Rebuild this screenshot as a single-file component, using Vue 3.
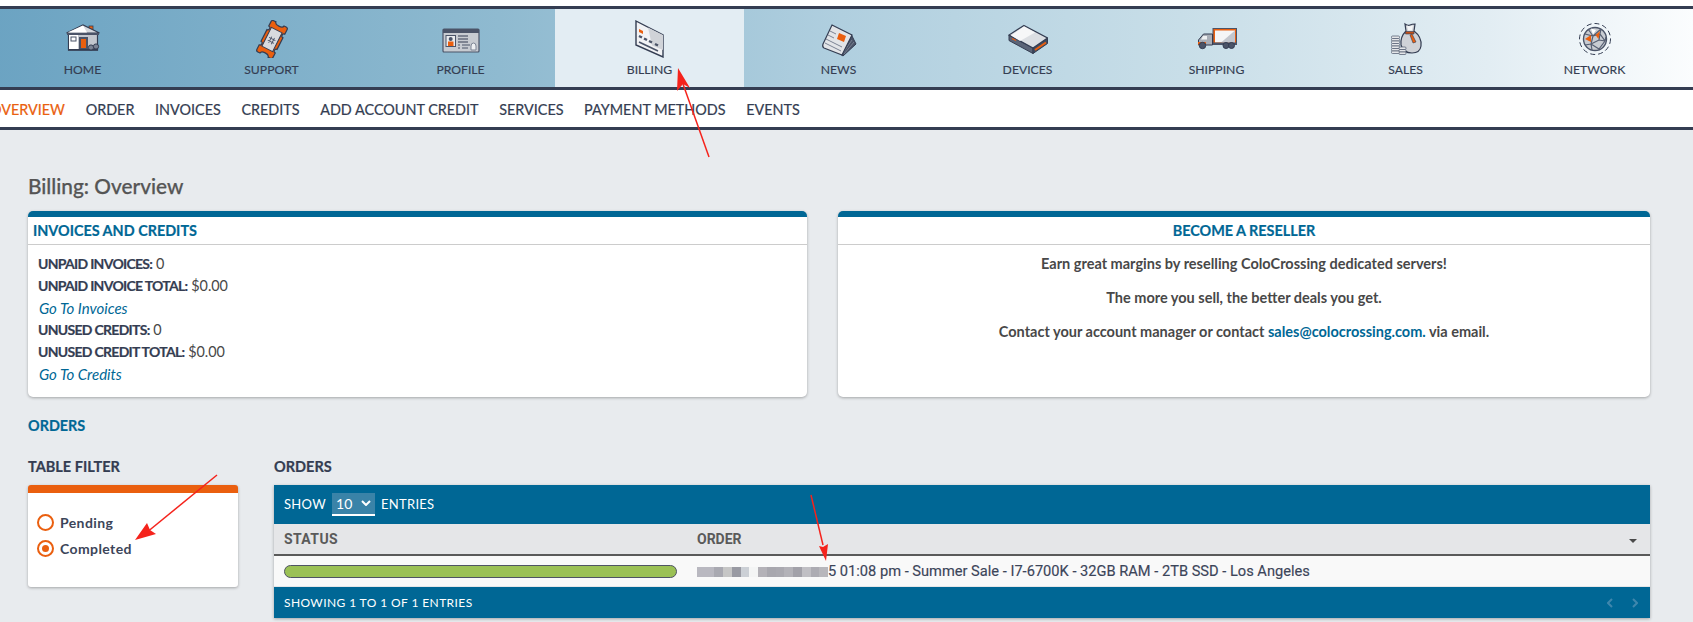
<template>
  <div class="page">
    <nav class="mainnav">
      <a class="navitem">
        <svg class="icon" viewBox="0 0 40 38">
          <rect x="26" y="6" width="4" height="5" fill="#ea5f0f" stroke="#343d52" stroke-width=".8" />
          <rect x="5.5" y="13" width="29" height="17" fill="#c3c7ce" stroke="#343d52" stroke-width="1.2" />
          <rect x="6" y="14" width="9" height="15.5" fill="#fff" />
          <polygon points="3.5,13 20,5 36.5,13" fill="#d5d8dd" stroke="#343d52" stroke-width="1.2" />
          <polygon points="4.5,12.6 20,5.4 24,12.6" fill="#fff" />
          <rect x="4" y="13" width="32" height="2" fill="#4b5468" />
          <rect x="8" y="17" width="5" height="4" fill="none" stroke="#4b5468" />
          <rect x="16" y="17" width="9" height="12" fill="#4b5468" />
          <rect x="18" y="19" width="5" height="9" fill="#ea5f0f" />
          <rect x="5" y="29" width="30" height="1.6" fill="#343d52" />
          <circle cx="28" cy="27.5" r="2.6" fill="#7c8494" stroke="#343d52" />
          <circle cx="33" cy="26.5" r="2.6" fill="#7c8494" stroke="#343d52" />
        </svg>
        <span>HOME</span>
      </a>
      <a class="navitem">
        <svg class="icon" viewBox="0 0 40 38">
          <g transform="rotate(27 20 19.5)">
            <path d="M13 2h2.5a4.5 2.5 0 0 0 9 0H27q2 0 2 2v5a2 2 0 0 0 0 4v13a2 2 0 0 0 0 4v5q0 2-2 2h-2.5a4.5 2.5 0 0 0-9 0H13q-2 0-2-2v-5a2 2 0 0 0 0-4V13a2 2 0 0 0 0-4V4q0-2 2-2z" fill="#ea5f0f" stroke="#343d52" stroke-width="1.2" />
            <rect x="14" y="9" width="12" height="21" fill="#d8dbdf" stroke="#343d52" />
            <path d="M16.5 19h7M16.5 22h7M18.5 17v7M21.5 17v7" stroke="#4b5468" stroke-width=".9" fill="none" />
          </g>
        </svg>
        <span>SUPPORT</span>
      </a>
      <a class="navitem">
        <svg class="icon" viewBox="0 0 40 38">
          <rect x="2" y="9" width="36" height="23" rx="1" fill="#c7cbd1" stroke="#4b5468" stroke-width="1.2" />
          <rect x="2" y="9" width="36" height="4" fill="#4b5468" />
          <rect x="5" y="15.5" width="9.5" height="11" fill="#e9ebee" stroke="#4b5468" />
          <circle cx="9.7" cy="19" r="2" fill="#4b5468" />
          <rect x="7" y="21.5" width="5.5" height="4.5" fill="#ea5f0f" />
          <path d="M17 16h10M17 19h10M17 22h10" stroke="#343d52" stroke-width="1.2" />
          <path d="M17 25h2M21 25h8M17 28h2M21 28h6" stroke="#4b5468" stroke-width="1" />
          <path d="M30 30v-4q0-3 2.5-3t2.5 3v4z" fill="#eef0f2" stroke="#7c8494" />
        </svg>
        <span>PROFILE</span>
      </a>
      <a class="navitem active">
        <svg class="icon" viewBox="0 0 40 38">
          <polygon points="6,1 33,15 33,37 6,25" fill="#f2f3f5" stroke="#343d52" stroke-width="1.4" />
          <polygon points="18,7.5 33,15 33,30 22,25.5" fill="#d0d3d8" />
          <polygon points="9,9 13,11 13,14 9,12" fill="#ea5f0f" />
          <path d="M9 16l3 1.5M14 18.5l3 1.5M19 21l3 1.5M25 24l3 1.5" stroke="#4b5468" stroke-width="2.4" />
          <path d="M9 22l19 9" stroke="#4b5468" stroke-width="1.6" />
        </svg>
        <span>BILLING</span>
      </a>
      <a class="navitem">
        <svg class="icon" viewBox="0 0 40 38">
          <polygon points="32,14 37,24 24,36 20,33" fill="#4b5468" stroke="#343d52" />
          <path d="M31 18l-9 14M33 20l-9 13M35 22l-10 12" stroke="#8b92a0" stroke-width=".7" />
          <path d="M13 5 33 15 23 35 5 28q-2-1-1-4z" fill="#e3e5e8" stroke="#343d52" stroke-width="1.2" />
          <path d="M11 11l6 3M9 15l6 3M7 19l16 8M6 23l16 8" stroke="#7c8494" stroke-width="1" />
          <polygon points="20,13 27,16 25,22 18,19" fill="#ea5f0f" />
        </svg>
        <span>NEWS</span>
      </a>
      <a class="navitem">
        <svg class="icon" viewBox="0 0 40 38">
          <polygon points="1,15 25,28 25,33.5 1,20.5" fill="#5b6477" stroke="#343d52" />
          <polygon points="25,28 39.5,18 39.5,23.5 25,33.5" fill="#414a5e" stroke="#343d52" />
          <polygon points="16,5.5 39.5,18 25,28 1,15" fill="#dcdfe3" stroke="#343d52" stroke-width="1.2" />
          <polygon points="16,6.5 27,12.5 12,21 3,15.5" fill="#f6f7f8" />
          <path d="M27 30 38 22.5" stroke="#ea5f0f" stroke-width="2" />
          <path d="M4 18.5l4 2" stroke="#ea5f0f" stroke-width="1.2" />
        </svg>
        <span>DEVICES</span>
      </a>
      <a class="navitem">
        <svg class="icon" viewBox="0 0 40 38">
          <rect x="16" y="8.5" width="23.5" height="16" fill="#ea5f0f" stroke="#4b5468" />
          <polygon points="18,10.5 38,10.5 38,22.5 18,22.5" fill="#f5f6f7" />
          <polygon points="38,10.5 38,22.5 24,22.5" fill="#c3c7ce" />
          <rect x="14" y="22.5" width="26" height="2.5" fill="#4b5468" />
          <path d="M15.5 14v11h-14v-5l5-6z" fill="#a9aeb7" stroke="#343d52" />
          <polygon points="6,16 10,16 10,19.5 4,19.5" fill="#eef0f2" />
          <rect x="1" y="22" width="8" height="2.5" fill="#ea5f0f" />
          <circle cx="5.5" cy="25.5" r="3.2" fill="#4b5468" stroke="#343d52" />
          <circle cx="29" cy="25.5" r="3" fill="#4b5468" stroke="#343d52" />
          <circle cx="34.5" cy="25.5" r="3" fill="#4b5468" stroke="#343d52" />
        </svg>
        <span>SHIPPING</span>
      </a>
      <a class="navitem">
        <svg class="icon" viewBox="0 0 40 38">
          <path d="M19 4q3 2 5 1t5-1l-1 7q8 6 7 15-1 7-9 7-9 0-11-8-1-8 5-14z" fill="#cfd2d7" stroke="#343d52" stroke-width="1.2" />
          <path d="M21 5.5q3 1.5 6 0l-1 5h-4z" fill="#f5f6f7" />
          <path d="M19.5 11.5h8.5v2.5h-8.5z" fill="#c1511a" stroke="#343d52" stroke-width=".6" />
          <path d="M26 14l4 8-3 1-3-8z" fill="#ea5f0f" stroke="#343d52" stroke-width=".6" />
          <g fill="#e4e6e9" stroke="#5b6477" stroke-width=".8">
            <rect x="5.5" y="16" width="8" height="2.5" rx="1" />
            <rect x="5.5" y="18.5" width="8" height="2.5" rx="1" />
            <rect x="5.5" y="21" width="8" height="2.5" rx="1" />
            <rect x="5.5" y="23.5" width="8" height="2.5" rx="1" />
            <rect x="5.5" y="26" width="8" height="2.5" rx="1" />
            <rect x="5.5" y="28.5" width="8" height="2.5" rx="1" />
            <rect x="5.5" y="31" width="8" height="2.5" rx="1" />
            <rect x="13" y="27" width="7" height="2.5" rx="1" />
            <rect x="13" y="29.5" width="7" height="2.5" rx="1" />
            <rect x="13" y="32" width="7" height="2.5" rx="1" />
          </g>
        </svg>
        <span>SALES</span>
      </a>
      <a class="navitem">
        <svg class="icon" viewBox="0 0 40 38">
          <circle cx="20" cy="19" r="15.5" fill="none" stroke="#343d52" stroke-width="1" stroke-dasharray="5 3" />
          <circle cx="20" cy="19" r="11.5" fill="#c8ccd2" stroke="#4b5468" stroke-width="1.4" />
          <path d="M10 14l8 2 8-7M18 16l-2 8 8 5M16 24l-6 1M24 29l6-8-5-7-7 2M30 21l1-4M25 14l1-5M16 24l8-4 6 1M13 9l5 7M16 24l1 6M24 20l1-6" fill="none" stroke="#565f72" stroke-width="1.2" />
          <polygon points="16,8.5 21,10 18,14.5" fill="#fff" />
          <polygon points="25,11 23.5,19 20.5,15" fill="#ea5f0f" />
          <polygon points="10,19 16,15 16,22" fill="#ea5f0f" />
        </svg>
        <span>NETWORK</span>
      </a>
    </nav>

    <div class="subnav">
      <a class="current">OVERVIEW</a>
      <a>ORDER</a>
      <a>INVOICES</a>
      <a>CREDITS</a>
      <a>ADD ACCOUNT CREDIT</a>
      <a>SERVICES</a>
      <a>PAYMENT METHODS</a>
      <a>EVENTS</a>
    </div>

    <main class="content">
      <h1>Billing: Overview</h1>

      <div class="cards">
        <section class="card">
          <h2>INVOICES AND CREDITS</h2>
          <div class="card-body lines">
            <p><b>UNPAID INVOICES:</b> 0</p>
            <p><b>UNPAID INVOICE TOTAL:</b> $0.00</p>
            <p><a>Go To Invoices</a></p>
            <p><b>UNUSED CREDITS:</b> 0</p>
            <p><b>UNUSED CREDIT TOTAL:</b> $0.00</p>
            <p><a>Go To Credits</a></p>
          </div>
        </section>
        <section class="card reseller">
          <h2>BECOME A RESELLER</h2>
          <div class="card-body">
            <p>Earn great margins by reselling ColoCrossing dedicated servers!</p>
            <p>The more you sell, the better deals you get.</p>
            <p>Contact your account manager or contact <a>sales@colocrossing.com.</a> via email.</p>
          </div>
        </section>
      </div>

      <h3 class="section">ORDERS</h3>

      <div class="orders-wrap">
        <aside class="filter-col">
          <h4>TABLE FILTER</h4>
          <div class="filter">
            <label><i class="radio"></i>Pending</label>
            <label><i class="radio on"></i>Completed</label>
          </div>
        </aside>
        <div class="table-col">
          <h4>ORDERS</h4>
          <div class="table">
            <div class="tbar">
              <span>SHOW</span>
              <span class="select">10
                <svg viewBox="0 0 10 6" width="10" height="6"><path d="M1 1l4 4 4-4" fill="none" stroke="#fff" stroke-width="2" /></svg>
              </span>
              <span>ENTRIES</span>
            </div>
            <div class="thead">
              <div class="c-status">STATUS</div>
              <div class="c-order">ORDER</div>
              <i class="sort"></i>
            </div>
            <div class="trow">
              <div class="c-status"><div class="bar"></div></div>
              <div class="c-order order-text">
                <span class="mosaic">
                  <i v-for="(c, i) in mosaic" :key="i" :style="{ background: c }"></i>
                </span>5 01:08 pm - Summer Sale - I7-6700K - 32GB RAM - 2TB SSD - Los Angeles
              </div>
            </div>
            <div class="tfoot">
              <span>SHOWING 1 TO 1 OF 1 ENTRIES</span>
              <span class="pager">
                <svg viewBox="0 0 6 10" width="6" height="10"><path d="M5 1 1 5l4 4" fill="none" stroke="#3f87ad" stroke-width="2" /></svg>
                <svg viewBox="0 0 6 10" width="6" height="10"><path d="M1 1l4 4-4 4" fill="none" stroke="#3f87ad" stroke-width="2" /></svg>
              </span>
            </div>
          </div>
        </div>
      </div>
    </main>

    <!-- red arrows drawn on top of the screenshot -->
    <svg class="marks" viewBox="0 0 1693 622">
      <g fill="#f5231c" stroke="#f5231c">
        <path d="M709 157 683 84" stroke-width="1.5" fill="none" />
        <polygon points="678,68 690,88 683,84 677,91" stroke="none" />
        <path d="M217 475 146 533" stroke-width="1.5" fill="none" />
        <polygon points="135,540 147,523 150,530 156,534" stroke="none" />
        <path d="M811 495 823 545" stroke-width="1.5" fill="none" />
        <polygon points="826,561 819,546 823,547 828,544" stroke="none" />
      </g>
    </svg>
  </div>
</template>

<script setup>
// pixelated part of the order date
const mosaic = [
  "#b9b8c0", "#b9b8c0", "#a9a9b1", "#c6c6c6", "#999aa3", "#ccd0d6", "#f4f5f5",
  "#b4b2b8", "#a8a7ae", "#aaa9b0", "#b3b2b8", "#a2a1a9", "#c0bfc4",
  "#adacb3", "#b8b7bc",
];
</script>

<style>
html,
body {
  margin: 0;
  background: #e8ebee;
  overflow: hidden;
}
</style>

<style scoped>
.page {
  position: relative;
  height: 622px;
  padding-top: 6px;
  box-sizing: border-box;
  font-family: Lato, "Open Sans", sans-serif;
  color: #343d52;
  background: linear-gradient(#fff 6px, #e8ebee 6px);
  overflow: hidden;
}

.mainnav {
  display: flex;
  height: 78px;
  margin-left: -12px;
  padding-right: 12px;
  border-top: 3px solid #343d52;
  border-bottom: 3px solid #343d52;
  background: linear-gradient(90deg, #6ba3c2 0%, #8fbad0 30%, #b0cfdf 50%, #c8dee8 70%, #e2edf3 88%, #fbfdfe 100%);
}

.navitem {
  flex: 0 0 189px;
  display: flex;
  flex-direction: column;
  align-items: center;
  padding-top: 11px;
  box-sizing: border-box;
  font-size: 12.2px;
  line-height: 14px;
  color: #343d52;
  -webkit-text-stroke: 0.15px #343d52;
}

.navitem.active {
  background: #e3edf3;
}

.icon {
  width: 40px;
  height: 38px;
  margin-bottom: 5px;
}

.subnav {
  display: flex;
  gap: 20.6px;
  align-items: center;
  height: 36px;
  padding-top: 1px;
  background: #fff;
  border-bottom: 3px solid #343d52;
  font-size: 14.4px;
  -webkit-text-stroke: 0.2px currentColor;
  white-space: nowrap;
}

.subnav .current {
  color: #ea5f0f;
  margin-left: -10px;
}

.content {
  padding: 0 43px 0 28px;
}

h1 {
  margin: 0;
  padding-top: 43px;
  height: 81px;
  box-sizing: border-box;
  font-size: 20.8px;
  line-height: 26px;
  font-weight: 500;
  color: #555;
  -webkit-text-stroke: 0.25px #555;
}

.cards {
  display: grid;
  grid-template-columns: 779px 812px;
  gap: 31px;
}

.card {
  height: 186px;
  box-sizing: border-box;
  border-top: 6px solid #006795;
  border-radius: 5px;
  background: #fff;
  box-shadow: 0 1px 3px rgba(0, 0, 0, 0.3);
}

.card h2 {
  margin: 0;
  padding: 0 5px;
  height: 28px;
  line-height: 27px;
  font-size: 14.4px;
  font-weight: 700;
  color: #006795;
  -webkit-text-stroke: 0.2px #006795;
  border-bottom: 1px solid #ccc;
  box-sizing: border-box;
}

.card-body {
  padding: 8px 10px;
  font-size: 14.4px;
  line-height: 22px;
}

.card-body p {
  margin: 0;
}

.card-body a {
  color: #006795;
}

.lines a {
  font-style: italic;
  font-size: 15px;
  padding-left: 1px;
}

.lines p {
  height: 22px;
  color: #484848;
}

.lines b {
  font-size: 14px;
  letter-spacing: -0.7px;
  color: #343d52;
  -webkit-text-stroke: 0.2px #343d52;
}

.reseller {
  text-align: center;
}

.reseller .card-body {
  font-size: 14.5px;
  font-weight: 700;
  color: #484848;
}

.reseller p {
  margin-bottom: 12px;
}

.section {
  margin: 0;
  padding-top: 19px;
  height: 50px;
  box-sizing: border-box;
  line-height: 20px;
  font-size: 14.4px;
  font-weight: 700;
  color: #006795;
  -webkit-text-stroke: 0.2px #006795;
}

.orders-wrap {
  display: grid;
  grid-template-columns: 210px 1376px;
  gap: 36px;
  margin-top: 10px;
}

h4 {
  margin: 0;
  height: 28px;
  line-height: 20px;
  font-size: 14.5px;
  font-weight: 700;
  color: #343d52;
  -webkit-text-stroke: 0.2px #343d52;
}

.filter {
  height: 102px;
  box-sizing: border-box;
  padding-top: 16px;
  border-top: 8px solid #ea5f0f;
  border-radius: 3px;
  background: #fff;
  box-shadow: 0 1px 3px rgba(0, 0, 0, 0.3);
}

.filter label {
  display: flex;
  align-items: center;
  gap: 6px;
  height: 26px;
  padding-left: 9px;
  font-size: 14px;
  font-weight: 700;
  letter-spacing: 0.4px;
  color: #3c4559;
}

.radio {
  width: 17px;
  height: 17px;
  box-sizing: border-box;
  border: 2px solid #ea5f0f;
  border-radius: 50%;
  display: flex;
  align-items: center;
  justify-content: center;
}

.radio.on::after {
  content: "";
  width: 7px;
  height: 7px;
  border-radius: 50%;
  background: #ea5f0f;
}

.table {
  background: #fff;
  box-shadow: 0 1px 3px rgba(0, 0, 0, 0.3);
}

.tbar {
  display: flex;
  align-items: center;
  gap: 6px;
  height: 38px;
  padding: 0 0 1px 10px;
  background: #006795;
  color: #fff;
  font-size: 13px;
  letter-spacing: 0.3px;
}

.select {
  display: flex;
  align-items: center;
  justify-content: space-between;
  width: 43px;
  height: 23px;
  padding: 0 4px;
  box-sizing: border-box;
  background: #3a83a8;
  border-bottom: 2px solid #fff;
  font-size: 14px;
}

.thead,
.trow {
  display: flex;
  align-items: center;
  position: relative;
}

.thead {
  height: 32px;
  box-sizing: border-box;
  background: #e5e6e8;
  border-bottom: 2px solid #5a5a5a;
  font-family: Roboto, sans-serif;
  font-size: 14px;
  font-weight: 700;
  color: #5a5a5a;
}

.thead .c-status {
  letter-spacing: 0.4px;
}

.sort {
  position: absolute;
  right: 13px;
  top: 15px;
  border-left: 4px solid transparent;
  border-right: 4px solid transparent;
  border-top: 4px solid #4a4a4a;
}

.c-status {
  flex: 0 0 423px;
  padding-left: 10px;
  box-sizing: border-box;
}

.trow {
  height: 31px;
  background: #f9f9f9;
  border-bottom: 1px solid #e5e6e8;
  box-sizing: border-box;
}

.bar {
  width: 393px;
  height: 13px;
  box-sizing: border-box;
  border: 1px solid #4f5463;
  border-radius: 7px;
  background: #9bc155;
}

.order-text {
  font-family: Roboto, sans-serif;
  font-size: 14.65px;
  color: #3c4559;
  -webkit-text-stroke: 0.15px #3c4559;
  white-space: nowrap;
}

.mosaic {
  display: inline-flex;
  width: 131px;
  height: 10px;
  vertical-align: -1px;
}

.mosaic i {
  flex: 1;
}

.tfoot {
  display: flex;
  align-items: center;
  justify-content: space-between;
  height: 31px;
  padding: 0 12px 0 10px;
  background: #006795;
  color: #fff;
  font-size: 12px;
  letter-spacing: 0.4px;
}

.pager {
  display: flex;
  gap: 19px;
}

.marks {
  position: absolute;
  left: 0;
  top: 0;
  width: 1693px;
  height: 622px;
  pointer-events: none;
}
</style>
